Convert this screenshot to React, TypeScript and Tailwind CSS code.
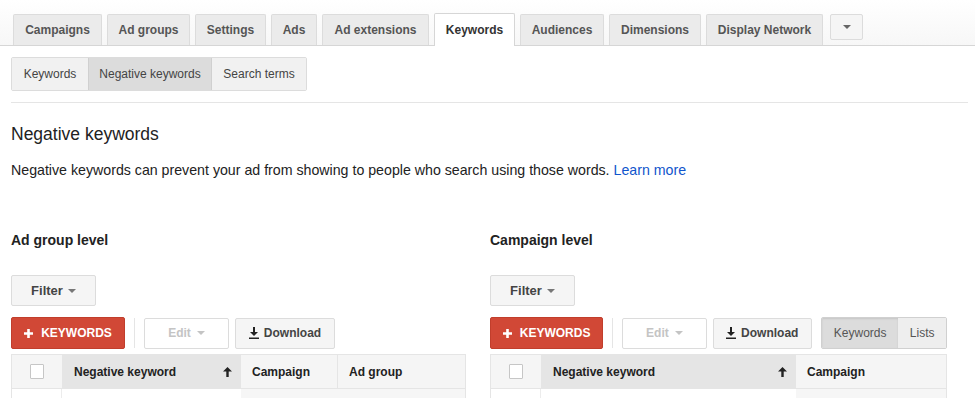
import React from "react";

const tabs = [
  { label: "Campaigns", w: "w-[89px]" },
  { label: "Ad groups", w: "w-[83px]" },
  { label: "Settings", w: "w-[71px]" },
  { label: "Ads", w: "w-[46px]" },
  { label: "Ad extensions", w: "w-[107px]" },
  { label: "Keywords", w: "w-[81px]", active: true },
  { label: "Audiences", w: "w-[84px]" },
  { label: "Dimensions", w: "w-[92px]" },
  { label: "Display Network", w: "w-[117px]" },
];

function Caret({ className = "" }: { className?: string }) {
  return (
    <svg width="8" height="4" viewBox="0 0 8 4" className={className}>
      <path d="M0 0h8L4 4z" fill="currentColor" />
    </svg>
  );
}

function DownloadIcon() {
  return (
    <svg width="10" height="12" viewBox="0 0 10 12" className="mr-[5px]">
      <path d="M4 0h2v5h3L5 9 1 5h3z" fill="#222" />
      <rect x="0" y="10.5" width="10" height="1.5" fill="#222" />
    </svg>
  );
}

function SortArrow() {
  return (
    <svg width="9" height="10" viewBox="0 0 9 10">
      <path d="M4.5 0L9 4.5H5.7V10H3.3V4.5H0z" fill="#222" />
    </svg>
  );
}

function Checkbox() {
  return <div className="h-[15px] w-[14px] rounded-[1px] border border-[#c6c6c6] bg-white" />;
}

function Toolbar({ toggle }: { toggle?: boolean }) {
  return (
    <div className="mt-[11px] flex items-center">
      <button className="flex h-[32px] w-[114px] items-center justify-center rounded-[2px] border border-[#c13e2c] bg-[#d14836] text-[12px] font-bold text-white">
        <svg width="9" height="9" viewBox="0 0 9 9" className="mr-[8px]">
          <path d="M3.2 0h2.6v3.2H9v2.6H5.8V9H3.2V5.8H0V3.2h3.2z" fill="#fff" />
        </svg>
        KEYWORDS
      </button>
      <div className="mx-[9px] h-[30px] w-px bg-[#e5e5e5]" />
      <button className="flex h-[31px] w-[85px] items-center justify-center rounded-[2px] border border-[#dcdcdc] bg-white text-[12px] font-bold text-[#c4c4c4]">
        Edit
        <Caret className="ml-[6px] text-[#c4c4c4]" />
      </button>
      <button className="ml-[6px] flex h-[31px] w-[100px] items-center justify-center rounded-[2px] border border-[#dcdcdc] bg-[#f5f5f5] text-[12px] font-bold text-[#444]">
        <DownloadIcon />
        Download
      </button>
      {toggle && (
        <div className="ml-[9px] flex h-[32px] overflow-hidden rounded-[2px] border border-[#d0d0d0] text-[12px] text-[#555]">
          <div className="flex w-[77px] items-center justify-center bg-[#dcdcdc] shadow-[inset_0_1px_2px_rgba(0,0,0,0.1)]">
            Keywords
          </div>
          <div className="flex w-[48px] items-center justify-center bg-[#eeeeee]">Lists</div>
        </div>
      )}
    </div>
  );
}

function Level({
  title,
  cols,
  kwWidth,
  toggle,
  width,
}: {
  title: string;
  cols: { label: string; w: string }[];
  kwWidth: string;
  toggle?: boolean;
  width: string;
}) {
  return (
    <div className={width}>
      <h3 className="text-[14px] font-bold leading-[16px] text-[#222]">{title}</h3>
      <button className="mt-[27px] flex h-[31px] w-[85px] items-center justify-center rounded-[2px] border border-[#dcdcdc] bg-[#f5f5f5] text-[13px] font-bold text-[#444]">
        Filter
        <Caret className="ml-[5px] text-[#777]" />
      </button>
      <Toolbar toggle={toggle} />
      <div className="mt-[5px] border-x border-t border-[#e5e5e5]">
        <div className="flex h-[34px] border-b border-[#e5e5e5] bg-[#f5f5f5] text-[12px] font-bold text-[#222]">
          <div className="flex w-[50px] items-center justify-center">
            <Checkbox />
          </div>
          <div className={`flex items-center justify-between bg-[#e5e5e5] pl-[12px] pr-[9px] ${kwWidth}`}>
            Negative keyword
            <SortArrow />
          </div>
          {cols.map((c, i) => (
            <div
              key={c.label}
              className={`flex items-center border-[#e5e5e5] pl-[11px] ${c.w} ${i > 0 ? "border-l" : ""}`}
            >
              {c.label}
            </div>
          ))}
        </div>
        <div className="flex h-[12px]">
          <div className="w-[50px] border-r border-[#ececec] bg-white" />
          <div className={`bg-white ${kwWidth}`} />
          <div className="flex-1 bg-[#f6f6f6]" />
        </div>
      </div>
    </div>
  );
}

export default function App() {
  return (
    <div className="h-[398px] w-[975px] overflow-hidden bg-white font-['Liberation_Sans',Arial,sans-serif]">
      <div className="flex items-end border-b border-[#d6d6d6] bg-gradient-to-b from-white to-[#f7f7f7] pl-[13px] pt-[13px]">
        <div className="flex items-end gap-[5px]">
          {tabs.map((t) =>
            t.active ? (
              <div
                key={t.label}
                className={`-mb-px flex h-[33px] items-center justify-center rounded-t-[2px] border border-b-0 border-[#d6d6d6] bg-white pb-px text-[12px] font-bold text-[#333] ${t.w}`}
              >
                {t.label}
              </div>
            ) : (
              <div
                key={t.label}
                className={`flex h-[31px] items-center justify-center rounded-t-[2px] border border-b-0 border-[#dcdcdc] bg-[#ebebeb] text-[12px] font-bold text-[#555] ${t.w}`}
              >
                {t.label}
              </div>
            )
          )}
        </div>
        <div className="mb-[5px] ml-[7px] flex h-[26px] w-[33px] items-center justify-center rounded-[2px] border border-[#dcdcdc] bg-[#f5f5f5] text-[#666]">
          <Caret />
        </div>
      </div>

      <div className="ml-[11px] mt-[11px] flex h-[34px] w-[296px] overflow-hidden rounded-[2px] border border-[#dcdcdc] text-[12px] text-[#444]">
        <div className="flex w-[76px] items-center justify-center bg-[#f1f1f1]">Keywords</div>
        <div className="flex w-[124px] items-center justify-center border-x border-[#d0d0d0] bg-[#dcdcdc]">
          Negative keywords
        </div>
        <div className="flex flex-1 items-center justify-center bg-[#f1f1f1]">Search terms</div>
      </div>

      <div className="ml-[11px] mr-[7px] mt-[11px] border-t border-[#e5e5e5]" />

      <div className="px-[11px]">
        <h1 className="mt-[20px] text-[17.5px] leading-[22px] text-[#222]">Negative keywords</h1>
        <p className="mt-[17px] text-[14.2px] leading-[16px] text-[#222]">
          Negative keywords can prevent your ad from showing to people who search using those words.{" "}
          <span className="text-[#1155cc]">Learn more</span>
        </p>

        <div className="mt-[54px] flex gap-[24px]">
          <Level
            title="Ad group level"
            width="w-[455px]"
            kwWidth="w-[179px]"
            cols={[
              { label: "Campaign", w: "w-[96px]" },
              { label: "Ad group", w: "flex-1" },
            ]}
          />
          <Level
            title="Campaign level"
            width="w-[457px]"
            kwWidth="w-[255px]"
            toggle
            cols={[{ label: "Campaign", w: "flex-1" }]}
          />
        </div>
      </div>
    </div>
  );
}
